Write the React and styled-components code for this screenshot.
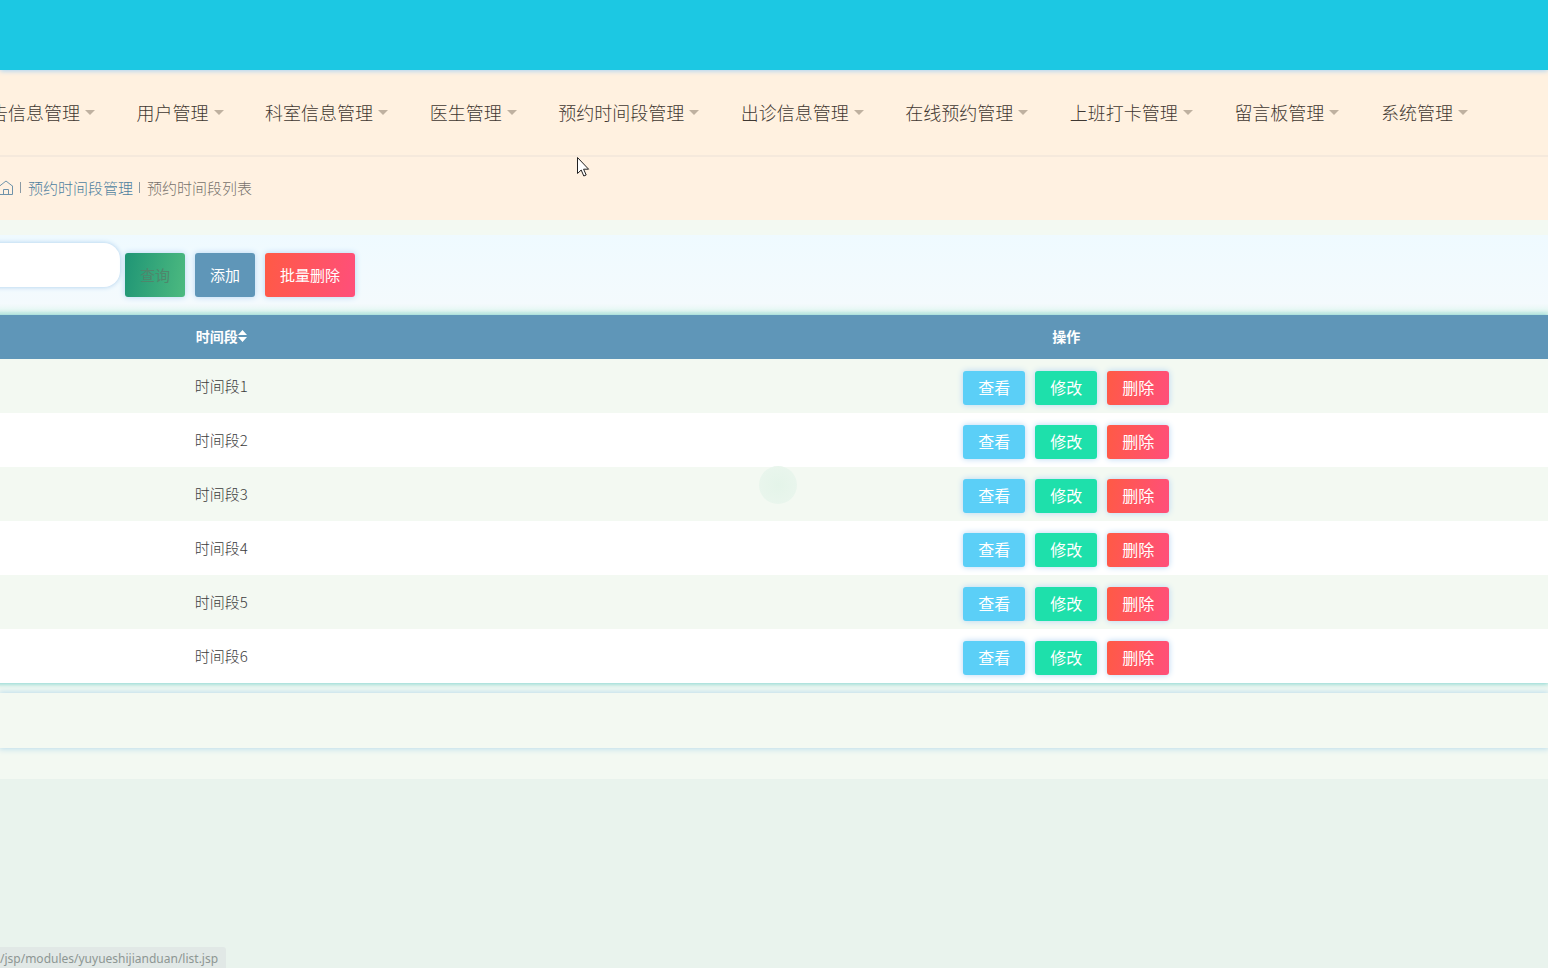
import React, { useState } from "react";
import styled, { createGlobalStyle } from "styled-components";

const GlobalStyle = createGlobalStyle`
  * {
    box-sizing: border-box;
  }
  body {
    margin: 0;
    background: #e9f3ed;
    color: #3c3c3c;
    font-family: "Noto Sans", "Noto Sans CJK SC", sans-serif;
    font-size: 15px;
    overflow-x: hidden;
  }
`;

const Page = styled.div`
  min-height: 100vh;
  overflow: hidden;
`;

const TopBar = styled.header`
  position: relative;
  height: 70px;
  background: #1cc8e3;
  box-shadow: 0 1px 5px #a9d3f5;
`;

const Nav = styled.nav`
  display: flex;
  justify-content: space-between;
  align-items: center;
  height: 87px;
  margin-left: -28px;
  padding: 0 80px 1px 0;
  background: #fff1e0;
  border-bottom: 2px solid #f5e9dc;
`;

const NavLink = styled.a`
  display: flex;
  align-items: center;
  gap: 5px;
  color: #3f3832;
  font-family: "Noto Sans CJK SC", sans-serif;
  font-size: 18px;
  font-weight: 300;
  line-height: 26px;
  white-space: nowrap;
  text-decoration: none;

  &::after {
    content: "";
    border: 5px solid transparent;
    border-top-color: #bfb1a0;
    border-bottom: 0;
  }
`;

const Breadcrumb = styled.div`
  display: flex;
  align-items: center;
  gap: 6px;
  height: 63px;
  padding-bottom: 2px;
  background: #fff1e1;
  color: #77726c;
  font-family: "Noto Sans CJK SC", sans-serif;
  line-height: 22px;
  font-weight: 300;

  a {
    display: flex;
    color: #4e7f9f;
    text-decoration: none;
  }
`;

const Divider = styled.span`
  width: 2px;
  height: 11px;
  border-left: 1px solid #8a99a3;
`;

const Content = styled.main`
  padding: 15px 0 31px;
  background: #f3f9f2;
`;

const SearchForm = styled.form`
  display: flex;
  align-items: flex-start;
  gap: 10px;
  height: 78px;
  padding: 8px 0;
  background: linear-gradient(#effaff, #f4fafd 88%, #e4f6f0);
`;

const SearchInput = styled.input`
  width: 220px;
  height: 44px;
  margin: 0 -5px 0 -100px;
  padding: 0 20px;
  border: 0;
  border-radius: 16px;
  outline: 0;
  background: #fff;
  box-shadow: 0 0 5px #a9cdec;
  font-size: 15px;
`;

const fills = {
  search: "linear-gradient(100deg, #1f9575, #4dba80)",
  add: "#5f96b8",
  view: "#5bcff7",
  edit: "#1ee0ab",
  remove: "linear-gradient(100deg, #ff5a45, #ff4f7b)",
};

const Button = styled.button`
  height: 44px;
  margin-top: 10px;
  padding: 0 15px 2px;
  border: 0;
  border-radius: 3px;
  background: ${(props) => fills[props.$kind]};
  box-shadow: 0 0 6px #b4d5f3;
  color: ${(props) => (props.$kind === "search" ? "#4f866c" : "#fff")};
  font-family: "Noto Sans CJK SC", sans-serif;
  font-size: 15px;
  cursor: pointer;
`;

const RowButton = styled(Button)`
  height: 34px;
  margin: 0;
  font-size: 16px;
`;

const Table = styled.table`
  width: calc(100% + 142px);
  margin: 2px 0 0 -142px;
  border-collapse: collapse;
  table-layout: fixed;
  text-align: center;
  box-shadow: 0 0 5px 1px #7fd3cf;
  font-family: "Noto Sans CJK SC", sans-serif;

  th {
    height: 44px;
    padding: 0 0 2px;
    background: #5f96b8;
    color: #fff;
    font-size: 14px;
    line-height: 20px;
  }
  th:first-child {
    width: 43%;
  }
  td {
    height: 54px;
    padding: 4px 0 0;
    font-weight: 300;
    line-height: 22px;
  }
  td:first-child {
    padding: 0;
  }
  tbody tr {
    background: #fff;
  }
  tbody tr:nth-child(odd) {
    background: #f3f9f2;
  }
`;

const SortLabel = styled.span`
  display: inline-flex;
  align-items: center;
`;

const Actions = styled.div`
  display: flex;
  justify-content: center;
  gap: 10px;
`;

const Pager = styled.div`
  height: 55px;
  margin-top: 10px;
  background: #f3f9f2;
  box-shadow: 0 0 6px 1px #b9dcec;
`;

const StatusBar = styled.div`
  position: fixed;
  left: 0;
  bottom: 0;
  height: 21px;
  padding-right: 8px;
  border-radius: 0 3px 0 0;
  background: #e1e8e6;
  color: #8d9693;
  font-family: "Noto Sans", sans-serif;
  font-size: 12px;
  line-height: 23px;
`;

const Spot = styled.div`
  position: absolute;
  left: 759px;
  top: 466px;
  width: 38px;
  height: 38px;
  border-radius: 50%;
  background: radial-gradient(#e4f4e9, #ebf6ee);
`;

const Pointer = styled.svg`
  position: absolute;
  left: 576px;
  top: 156px;
`;

const menus = [
  "公告信息管理",
  "用户管理",
  "科室信息管理",
  "医生管理",
  "预约时间段管理",
  "出诊信息管理",
  "在线预约管理",
  "上班打卡管理",
  "留言板管理",
  "系统管理",
];

const slots = ["时间段1", "时间段2", "时间段3", "时间段4", "时间段5", "时间段6"];

function HomeIcon() {
  return (
    <svg width="14" height="16" viewBox="0 0 14 16" fill="none" stroke="#6f93aa">
      <path d="M-1 6.500 6 1l7 5.500M12.500 6v8.500H-.5V6M3.500 14.500v-5h5v5" />
    </svg>
  );
}

function SortIcon() {
  return (
    <svg width="9" height="12" viewBox="0 0 9 12" fill="#fff">
      <path d="M4.500 0 9 5H0zM4.500 12 0 7h9z" />
    </svg>
  );
}

function App() {
  let [keyword, setKeyword] = useState("");

  return (
    <Page>
      <GlobalStyle />
      <TopBar />
      <Nav>
        {menus.map((name) => (
          <NavLink href="#" key={name}>
            {name}
          </NavLink>
        ))}
      </Nav>
      <Breadcrumb>
        <a href="#" aria-label="首页">
          <HomeIcon />
        </a>
        <Divider />
        <a href="#">预约时间段管理</a>
        <Divider />
        <span>预约时间段列表</span>
      </Breadcrumb>

      <Content>
        <SearchForm onSubmit={(e) => e.preventDefault()}>
          <SearchInput
            aria-label="时间段"
            value={keyword}
            onChange={(e) => setKeyword(e.target.value)}
          />
          <Button $kind="search">查询</Button>
          <Button type="button" $kind="add">添加</Button>
          <Button type="button" $kind="remove">批量删除</Button>
        </SearchForm>

        <Table>
          <thead>
            <tr>
              <th>
                <SortLabel>
                  时间段
                  <SortIcon />
                </SortLabel>
              </th>
              <th>操作</th>
            </tr>
          </thead>
          <tbody>
            {slots.map((slot) => (
              <tr key={slot}>
                <td>{slot}</td>
                <td>
                  <Actions>
                    <RowButton $kind="view">查看</RowButton>
                    <RowButton $kind="edit">修改</RowButton>
                    <RowButton $kind="remove">删除</RowButton>
                  </Actions>
                </td>
              </tr>
            ))}
          </tbody>
        </Table>
        <Pager />
      </Content>

      <StatusBar>/jsp/modules/yuyueshijianduan/list.jsp</StatusBar>
      <Spot />
      <Pointer width="14" height="21" viewBox="0 0 14 21">
        <path
          d="M1.500 1.500v16l3.700-3.500 2.600 6 2.400-1-2.600-5.800h5z"
          fill="#fff"
          stroke="#222"
        />
      </Pointer>
    </Page>
  );
}

export default App;
